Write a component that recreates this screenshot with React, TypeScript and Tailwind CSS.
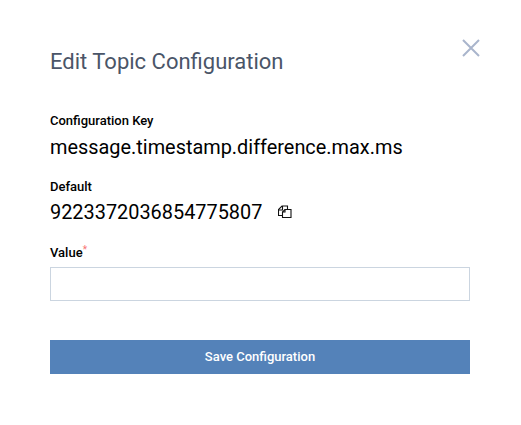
export default function App() {
  return (
    <div className="relative w-[521px] h-[425px] bg-white font-['Roboto',sans-serif] px-[50px] pt-[48px] overflow-hidden">
      <h1 className="text-[22px] leading-[28px] font-normal text-[#4a5568]">Edit Topic Configuration</h1>
      <button className="absolute left-[462px] top-[39px] w-[18px] h-[18px]" aria-label="Close">
        <svg width="18" height="18" viewBox="0 0 18 18" fill="none" stroke="#a9b5cc" strokeWidth="2">
          <path d="M1 1L17 17M17 1L1 17" />
        </svg>
      </button>
      <div className="mt-[37px] flex flex-col">
        <div className="text-[13px] leading-[16px] font-medium text-black">Configuration Key</div>
        <div className="mt-[7px] text-[19.9px] leading-[24px] text-black">message.timestamp.difference.max.ms</div>
        <div className="mt-[19px] text-[13px] leading-[16px] font-medium text-black">Default</div>
        <div className="mt-[6px] flex items-center text-[19.9px] leading-[24px] text-black">
          <span>9223372036854775807</span>
          <svg className="ml-[16px] -mt-[2px]" width="14" height="14" viewBox="0 0 14 14" fill="none" stroke="#111" strokeWidth="1.1">
            <path d="M4.5 10.5H0.5V4.5L4 1H9.5V4.5" />
            <path d="M0.5 5H4.5V1" />
            <path d="M7 4.5H13V12.5H4.5V7Z" fill="#fff" />
            <path d="M4.5 7H7V4.5" />
          </svg>
        </div>
        <div className="mt-[20px] text-[13px] leading-[16px] font-medium text-black">
          Value<sup className="text-[#f87171] text-[10px] font-normal top-[-4px]">*</sup>
        </div>
        <input className="mt-[6px] w-[420px] h-[34px] border border-[#cbd5e0] bg-white" />
        <button className="mt-[39px] w-[420px] h-[34px] bg-[#5482b9] text-white text-[13px] font-medium">Save Configuration</button>
      </div>
    </div>
  );
}
